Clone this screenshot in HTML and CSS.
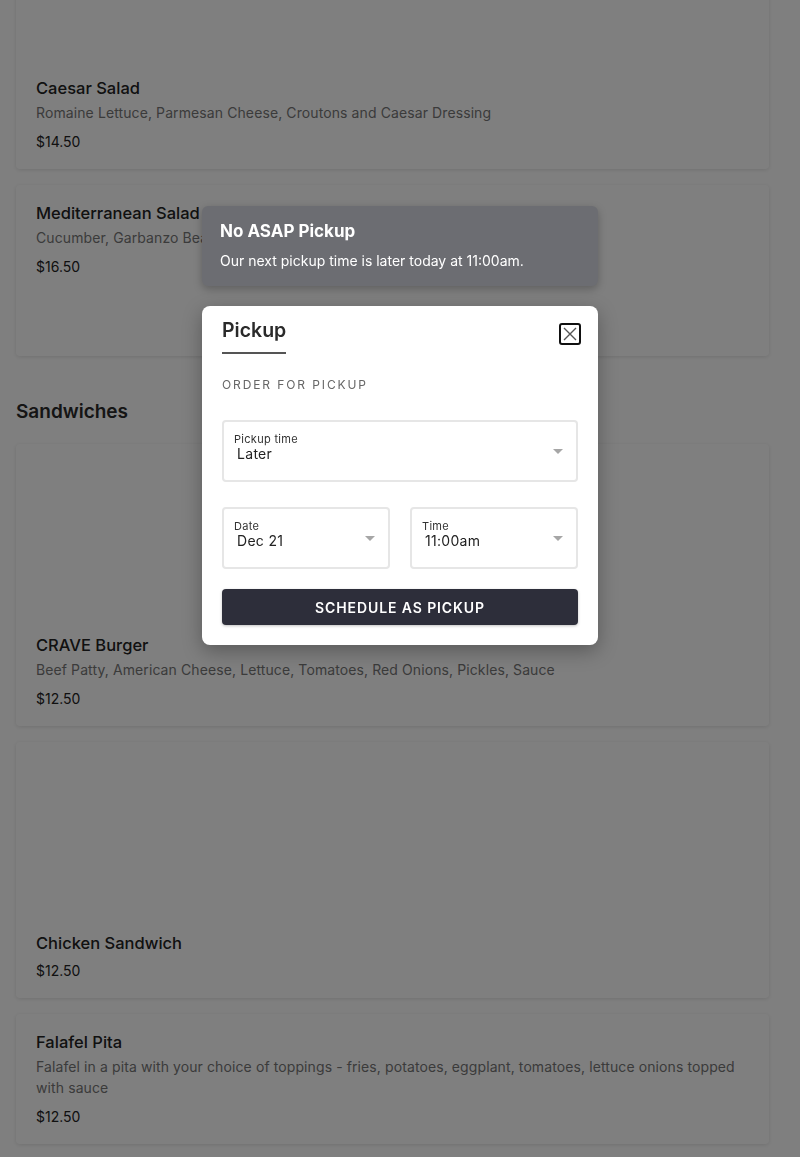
FILE: index.html
```html
<!DOCTYPE html>
<html lang="en">
<head>
<meta charset="utf-8">
<title>Menu – Pickup</title>
<link rel="stylesheet" href="styles.css">
</head>
<body>
<main class="menu">
  <section class="category">
    <article class="card">
      <div class="card-img"></div>
      <h3 class="item-name">Caesar Salad</h3>
      <p class="item-desc">Romaine Lettuce, Parmesan Cheese, Croutons and Caesar Dressing</p>
      <p class="item-price">$14.50</p>
    </article>
    <article class="card card-tall">
      <h3 class="item-name">Mediterranean Salad</h3>
      <p class="item-desc">Cucumber, Garbanzo Beans, Tomatoes, Red Onions, Feta Cheese</p>
      <p class="item-price">$16.50</p>
    </article>
  </section>
  <section class="category">
    <h2 class="category-title">Sandwiches</h2>
    <article class="card">
      <div class="card-img"></div>
      <h3 class="item-name">CRAVE Burger</h3>
      <p class="item-desc">Beef Patty, American Cheese, Lettuce, Tomatoes, Red Onions, Pickles, Sauce</p>
      <p class="item-price">$12.50</p>
    </article>
    <article class="card">
      <div class="card-img"></div>
      <h3 class="item-name">Chicken Sandwich</h3>
      <p class="item-price">$12.50</p>
    </article>
    <article class="card">
      <h3 class="item-name">Falafel Pita</h3>
      <p class="item-desc">Falafel in a pita with your choice of toppings - fries, potatoes, eggplant, tomatoes, lettuce onions topped with sauce</p>
      <p class="item-price">$12.50</p>
    </article>
  </section>
</main>

<div class="overlay"></div>

<div class="toast">
  <div class="toast-title">No ASAP Pickup</div>
  <div class="toast-body">Our next pickup time is later today at 11:00am.</div>
</div>

<div class="modal">
  <div class="modal-head">
    <div class="modal-tab">Pickup</div>
    <button class="close-btn" aria-label="Close">
      <svg width="14" height="14" viewBox="0 0 14 14"><path d="M1 1L13 13M13 1L1 13" stroke="#555" stroke-width="1.4" fill="none"/></svg>
    </button>
  </div>
  <div class="section-label">ORDER FOR PICKUP</div>
  <div class="field">
    <div class="field-text">
      <div class="field-label">Pickup time</div>
      <div class="field-value">Later</div>
    </div>
    <span class="caret"></span>
  </div>
  <div class="field-row">
    <div class="field">
      <div class="field-text">
        <div class="field-label">Date</div>
        <div class="field-value">Dec 21</div>
      </div>
      <span class="caret"></span>
    </div>
    <div class="field">
      <div class="field-text">
        <div class="field-label">Time</div>
        <div class="field-value">11:00am</div>
      </div>
      <span class="caret"></span>
    </div>
  </div>
  <button class="submit-btn">SCHEDULE AS PICKUP</button>
</div>
</body>
</html>
```

FILE: styles.css
```css
* { box-sizing: border-box; }

html, body {
  margin: 0;
  padding: 0;
  background: #ffffff;
  font-family: Inter, "Noto Sans", Arial, sans-serif;
  color: #222;
  overflow: hidden;
}

.menu {
  margin-top: -113px;
  padding: 0 31px 40px 16px;
}

.category {
  display: flex;
  flex-direction: column;
  gap: 16px;
}

.category + .category {
  margin-top: 44px;
}

.category-title {
  margin: 0 0 4px;
  font-size: 19px;
  line-height: 24px;
  font-weight: 600;
  color: #2a2a2a;
}

.card {
  display: flex;
  flex-direction: column;
  background: #fff;
  border-radius: 4px;
  padding: 16px 20px 17px;
  box-shadow: 0 1px 4px rgba(0, 0, 0, 0.12);
}

.card-tall {
  min-height: 171px;
}

.card-img {
  height: 173px;
}

.item-name {
  margin: 0;
  font-size: 16.5px;
  line-height: 24px;
  font-weight: 500;
  color: #222;
}

.item-desc {
  margin: 2px 0 3px;
  font-size: 14px;
  line-height: 21px;
  color: #767676;
  letter-spacing: 0.1px;
}

.item-price {
  margin: 6px 0 0;
  font-size: 14px;
  line-height: 20px;
  color: #222;
}

.overlay {
  position: fixed;
  inset: 0;
  background: rgba(0, 0, 0, 0.5);
}

.toast {
  position: fixed;
  top: 206px;
  left: 202px;
  width: 396px;
  padding: 14px 18px 15px;
  background: #6c6d72;
  color: #fff;
  border-radius: 6px;
  box-shadow: 0 3px 8px rgba(0, 0, 0, 0.25);
}

.toast-title {
  font-size: 17px;
  line-height: 22px;
  font-weight: 700;
}

.toast-body {
  margin-top: 9px;
  font-size: 14px;
  line-height: 20px;
}

.modal {
  position: fixed;
  top: 306px;
  left: 202px;
  width: 396px;
  padding: 12px 20px 20px;
  background: #fff;
  border-radius: 8px;
  box-shadow: 0 6px 20px rgba(0, 0, 0, 0.3);
}

.modal-head {
  display: flex;
  justify-content: space-between;
  align-items: flex-start;
}

.modal-tab {
  font-size: 19.5px;
  line-height: 24px;
  font-weight: 600;
  color: #2a2a2a;
  padding-bottom: 10px;
  border-bottom: 2px solid #555;
}

.close-btn {
  margin: 5px -3px 0 0;
  width: 22px;
  height: 22px;
  padding: 0;
  border: 2px solid #111;
  border-radius: 3px;
  background: #fff;
  display: flex;
  align-items: center;
  justify-content: center;
}

.section-label {
  margin-top: 23px;
  font-size: 12px;
  line-height: 16px;
  letter-spacing: 1.9px;
  color: #666;
}

.field {
  margin-top: 27px;
  height: 62px;
  border: 2px solid #e6e6e6;
  border-radius: 4px;
  display: flex;
  align-items: center;
  justify-content: space-between;
  padding: 0 13px 0 10px;
}

.field-text {
  align-self: flex-start;
  padding-top: 11px;
}

.field-label {
  font-size: 11px;
  line-height: 13px;
  color: #333;
  letter-spacing: 0.3px;
}

.field-value {
  padding-left: 3px;
  font-size: 14px;
  line-height: 16px;
  color: #222;
  letter-spacing: 0.3px;
}

.caret {
  width: 0;
  height: 0;
  border-left: 5px solid transparent;
  border-right: 5px solid transparent;
  border-top: 5px solid #a6a6a6;
}

.field-row {
  margin-top: 25px;
  display: grid;
  grid-template-columns: 1fr 1fr;
  gap: 20px;
}

.field-row .field {
  margin-top: 0;
}

.submit-btn {
  margin-top: 20px;
  width: 100%;
  height: 36px;
  border: none;
  border-radius: 4px;
  background: #2d2e3a;
  color: #fff;
  font-family: inherit;
  font-size: 14px;
  font-weight: 600;
  letter-spacing: 0.9px;
  box-shadow: 0 1px 3px rgba(0, 0, 0, 0.25);
}
```
